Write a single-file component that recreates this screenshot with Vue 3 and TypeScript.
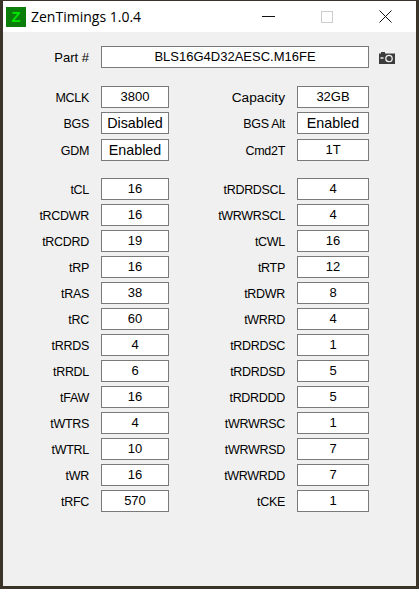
<template>
  <div class="window">
    <header class="titlebar">
      <div class="logo"><span>Z</span></div>
      <span class="title">ZenTimings 1.0.4</span>
      <div class="controls">
        <svg class="ctl ctl-min" width="13" height="13" viewBox="0 0 13 13"><path d="M0 6.5H13" stroke="#111" fill="none" /></svg>
        <svg class="ctl ctl-max" width="12" height="12" viewBox="0 0 12 12"><rect x="0.5" y="0.5" width="11" height="11" stroke="#ccc" fill="none" /></svg>
        <svg class="ctl ctl-close" width="13" height="13" viewBox="0 0 13 13"><path d="M0.5 0.5L12.5 12.5M12.5 0.5L0.5 12.5" stroke="#111" fill="none" /></svg>
      </div>
    </header>

    <main class="content">
      <section class="part">
        <label class="lbl lbl-plain">Part #</label>
        <div class="box box-part">BLS16G4D32AESC.M16FE</div>
        <svg class="camera" width="16" height="13" viewBox="0 0 16 13">
          <path d="M2 1H6V2.5H16V13H0V2.5H2Z" fill="#3c3c3c" />
          <path d="M1.5 7H4.5" stroke="#eee" stroke-width="1.5" />
          <circle cx="10" cy="7.5" r="3.2" fill="#3c3c3c" stroke="#eee" stroke-width="1.3" />
        </svg>
      </section>

      <section class="grid grid-top">
        <template v-for="row in topRows" :key="row[0]">
          <label class="lbl">{{ row[0] }}</label>
          <div class="box" :class="{ 'box-word': isWord(row[1]) }">{{ row[1] }}</div>
          <label class="lbl" :class="{ 'lbl-wide': row[2] === 'Capacity' }">{{ row[2] }}</label>
          <div class="box" :class="{ 'box-word': isWord(row[3]) }">{{ row[3] }}</div>
        </template>
      </section>

      <section class="grid grid-timings">
        <template v-for="row in timingRows" :key="row[0]">
          <label class="lbl">{{ row[0] }}</label>
          <div class="box">{{ row[1] }}</div>
          <label class="lbl">{{ row[2] }}</label>
          <div class="box">{{ row[3] }}</div>
        </template>
      </section>
    </main>
  </div>
</template>

<script setup lang="ts">
type Row = [string, string, string, string];

const topRows: Row[] = [
  ['MCLK', '3800', 'Capacity', '32GB'],
  ['BGS', 'Disabled', 'BGS Alt', 'Enabled'],
  ['GDM', 'Enabled', 'Cmd2T', '1T'],
];

const timingRows: Row[] = [
  ['tCL', '16', 'tRDRDSCL', '4'],
  ['tRCDWR', '16', 'tWRWRSCL', '4'],
  ['tRCDRD', '19', 'tCWL', '16'],
  ['tRP', '16', 'tRTP', '12'],
  ['tRAS', '38', 'tRDWR', '8'],
  ['tRC', '60', 'tWRRD', '4'],
  ['tRRDS', '4', 'tRDRDSC', '1'],
  ['tRRDL', '6', 'tRDRDSD', '5'],
  ['tFAW', '16', 'tRDRDDD', '5'],
  ['tWTRS', '4', 'tWRWRSC', '1'],
  ['tWTRL', '10', 'tWRWRSD', '7'],
  ['tWR', '16', 'tWRWRDD', '7'],
  ['tRFC', '570', 'tCKE', '1'],
];

// Disabled / Enabled render a bit larger than the numbers
const isWord = (value: string) => value.endsWith('abled');
</script>

<style>
body {
  background: #3a3428;
  overflow: hidden;
}
</style>

<style scoped>
.window {
  width: 413px;
  height: 585px;
  margin: 1px 0 0 3px;
  background: #f0f0f0;
  font-family: "Liberation Sans", Arial, sans-serif;
  font-size: 13px;
  color: #000;
  display: flex;
  flex-direction: column;
}

.titlebar {
  height: 31px;
  background: #fff;
  display: flex;
  align-items: center;
  padding-left: 3px;
}

.logo {
  width: 20px;
  height: 20px;
  background: #0a7d0a;
  display: flex;
  align-items: center;
  justify-content: center;
}

.logo span {
  color: #00e600;
  font-size: 15px;
  font-weight: bold;
  line-height: 1;
}

.title {
  margin-left: 5px;
  font-family: "Open Sans", sans-serif;
  font-size: 14px;
  color: #000;
}

.controls {
  margin-left: auto;
  display: flex;
  align-items: center;
  padding-right: 24px;
  gap: 46px;
}

.content {
  padding-top: 14px;
  display: flex;
  flex-direction: column;
}

.part {
  display: flex;
  align-items: center;
}

.part .lbl {
  width: 86px;
  margin-right: 12px;
}

.box-part {
  width: 268px;
}

.camera {
  margin-left: 10px;
}

.grid {
  display: grid;
  grid-template-columns: 86px 68px 104px 72px;
  grid-auto-rows: 22px;
  column-gap: 12px;
  row-gap: 4px;
}

.grid-top {
  margin-top: 18px;
  grid-template-rows: 22px 23px 22px;
}

.grid-timings {
  margin-top: 17px;
}

.lbl {
  height: 22px;
  text-align: right;
  line-height: 24px;
  font-size: 12.5px;
  letter-spacing: -0.3px;
  white-space: nowrap;
}

.lbl-plain {
  font-size: 13px;
  letter-spacing: 0;
}

.lbl-wide {
  font-size: 13.7px;
  letter-spacing: 0;
}

.box {
  height: 22px;
  box-sizing: border-box;
  border: 1px solid #7a7a7a;
  background: #fff;
  text-align: center;
  line-height: 20px;
  white-space: nowrap;
}

.box-word {
  font-size: 14.3px;
}
</style>
